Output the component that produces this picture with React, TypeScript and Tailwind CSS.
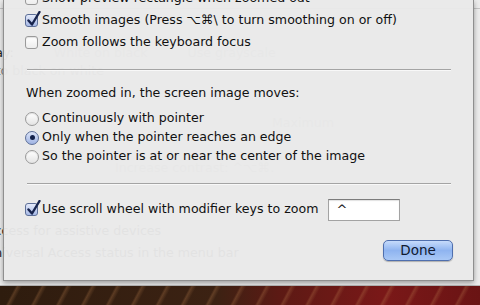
import React from 'react';

const font = { fontFamily: '"DejaVu Sans", "Liberation Sans", sans-serif' };

const CheckBox = ({ checked }: { checked?: boolean }) => {
  if (!checked) {
    return (
      <span className="relative w-[13px] h-[13px] shrink-0 rounded-[3px] border border-[#9a9a9a] bg-gradient-to-b from-white to-[#ededed] shadow-[inset_0_1px_1px_rgba(0,0,0,0.12)]" />
    );
  }
  return (
    <span className="relative w-[13px] h-[13px] shrink-0 rounded-[3px] border border-[#5d6f98] bg-gradient-to-b from-[#e4eafa] to-[#a7b9e6]">
      <svg className="absolute left-[1px] top-[-4px]" width="14" height="16" viewBox="0 0 14 16">
        <path d="M1.5 9.5 L5 13.5 L12.5 1" fill="none" stroke="#17244d" strokeWidth="2.4" strokeLinecap="round" strokeLinejoin="round" />
      </svg>
    </span>
  );
};

const Radio = ({ selected }: { selected?: boolean }) =>
  selected ? (
    <span className="w-[14px] h-[14px] shrink-0 rounded-full border border-[#5d6f98] bg-gradient-to-b from-[#dde5f8] to-[#9fb3e3] flex items-center justify-center">
      <span className="w-[5px] h-[5px] rounded-full bg-[#13214a]" />
    </span>
  ) : (
    <span className="w-[14px] h-[14px] shrink-0 rounded-full border border-[#9a9a9a] bg-gradient-to-b from-white to-[#e4e4e4] shadow-[inset_0_1px_1px_rgba(0,0,0,0.1)]" />
  );

const Row = ({ children }: { children: React.ReactNode }) => (
  <div className="flex items-center gap-[4px] h-[22px] text-[12.6px] text-[#111] whitespace-nowrap">{children}</div>
);

const RadioRow = ({ label, selected }: { label: string; selected?: boolean }) => (
  <div className="flex items-center gap-[3px] h-[19px] text-[12.6px] text-[#111] whitespace-nowrap">
    <Radio selected={selected} />
    <span>{label}</span>
  </div>
);

export default function App() {
  return (
    <div
      style={font}
      className="relative w-[480px] h-[305px] overflow-hidden bg-[repeating-linear-gradient(118deg,transparent_0px,transparent_16px,rgba(190,130,80,0.28)_18px,transparent_22px),linear-gradient(90deg,#2e1c0e_0%,#3c2213_45%,#5c1a14_58%,#7a1818_80%,#6a1414_100%)]"
    >
      {/* background window, mostly hidden under the sheet */}
      <div className="h-[286px] bg-[#ececec] border-b border-[#b8b8b8] text-[12.6px] text-[#1c1c1c] whitespace-nowrap flex flex-col">
        <div className="h-[9px] border-b border-[#c4c4c4]" />
        <div className="mt-[36px] h-[16px] leading-[16px] -ml-[36px] flex gap-[40px]">
          <span>Display:</span>
          <span className="text-[#aaa]">White on black</span>
          <span className="text-[#aaa]">Use grayscale</span>
        </div>
        <div className="mt-[2px] h-[16px] leading-[16px] -ml-[50px] text-[#888]">Switch to black on white</div>
        <div className="mt-[36px] h-[16px] leading-[16px] ml-[272px] text-[#aaa]">Maximum</div>
        <div className="mt-[29px] h-[16px] leading-[16px] ml-[115px] text-[#aaa]">Increase contrast: ^⌥⌘.</div>
        <div className="mt-[47px] h-[16px] leading-[16px] -ml-[60px]">Enable access for assistive devices</div>
        <div className="mt-[6px] h-[16px] leading-[16px] -ml-[53px]">Show Universal Access status in the menu bar</div>
      </div>

      {/* the sheet */}
      <div className="absolute left-[3px] top-0 w-[471px] h-[281px] bg-[rgba(233,233,233,0.965)] border-l border-r border-b border-[#8f8f8f] shadow-[0_2px_5px_rgba(0,0,0,0.35)] pl-[21px] pr-[20px] flex flex-col">
        <div className="mt-[-13px]">
          <Row>
            <CheckBox />
            <span>Show preview rectangle when zoomed out</span>
          </Row>
          <Row>
            <CheckBox checked />
            <span>Smooth images (Press ⌥⌘\ to turn smoothing on or off)</span>
          </Row>
          <Row>
            <CheckBox />
            <span>Zoom follows the keyboard focus</span>
          </Row>
        </div>

        <div className="mt-[16px] ml-[2px] w-[424px] h-px bg-[#a4a4a4] shadow-[0_1px_0_#f8f8f8]" />

        <div className="mt-[15px] h-[16px] leading-[16px] text-[12.6px] text-[#111] pl-[1px]">
          When zoomed in, the screen image moves:
        </div>
        <div className="mt-[8px] flex flex-col">
          <RadioRow label="Continuously with pointer" />
          <RadioRow label="Only when the pointer reaches an edge" selected />
          <RadioRow label="So the pointer is at or near the center of the image" />
        </div>

        <div className="mt-[17px] ml-[2px] w-[424px] h-px bg-[#a4a4a4] shadow-[0_1px_0_#f8f8f8]" />

        <div className="mt-[14px] flex items-center h-[23px] text-[12.6px] text-[#111] whitespace-nowrap">
          <CheckBox checked />
          <span className="ml-[4px]">Use scroll wheel with modifier keys to zoom</span>
          <div className="ml-[9px] w-[72px] h-[22px] bg-white border border-[#a3a3a3] border-t-[#7c7c7c] shadow-[inset_0_1px_1px_rgba(0,0,0,0.12)] pl-[8px] leading-[20px] text-[13px]">
            ^
          </div>
        </div>

        <div className="mt-[19px] flex justify-end">
          <button className="w-[70px] h-[21px] rounded-[5px] border border-[#4f6fae] bg-gradient-to-b from-[#c6dbfb] via-[#8fb4f0] to-[#a9c8f6] shadow-[0_1px_1px_rgba(0,0,0,0.25)] text-[13.5px] text-[#101a30] leading-[19px]">
            Done
          </button>
        </div>
      </div>
    </div>
  );
}
